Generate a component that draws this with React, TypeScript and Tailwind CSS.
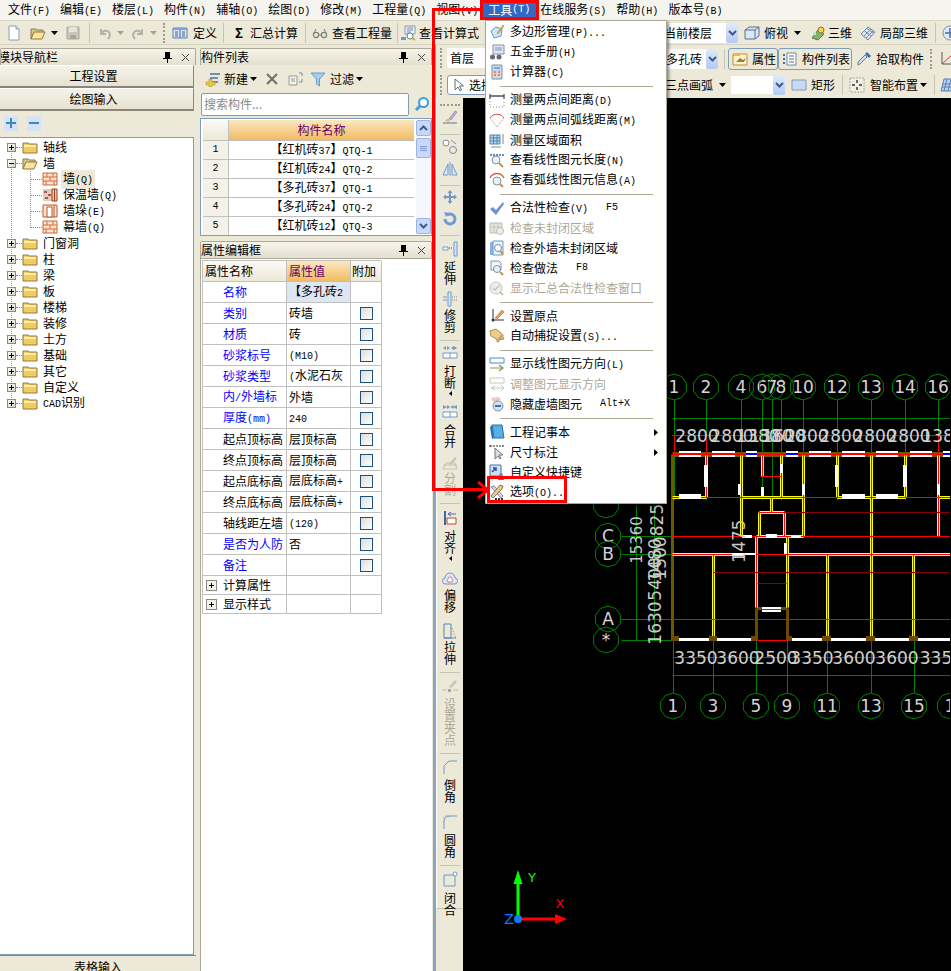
import React from "react";

const MONO = "font-['Liberation_Mono',monospace] text-[10px]";

// SimSun-style text: latin runs are half the width of CJK
const Mix = ({ t }: { t: string }) => (
  <>
    {t.split(/([\x20-\x7e]+)/).map((s, i) =>
      i % 2 ? (
        <span key={i} className={MONO}>
          {s}
        </span>
      ) : (
        s
      ),
    )}
  </>
);

const S = ({ c = "", size = 16, children }: { c?: string; size?: number; children: React.ReactNode }) => (
  <svg viewBox="0 0 16 16" width={size} height={size} className={`block shrink-0 ${c}`}>
    {children}
  </svg>
);

const Caret = ({ c = "" }: { c?: string }) => (
  <svg viewBox="0 0 7 4" width={7} height={4} className={`shrink-0 ${c}`}>
    <path d="M0 0h7L3.5 4z" fill="#000" />
  </svg>
);

const ComboArrow = () => (
  <div className="flex h-[20px] w-[12px] shrink-0 items-center justify-center rounded-[2px] bg-[linear-gradient(#dfe9fb,#b4c9f5)]">
    <svg viewBox="0 0 9 6" width={9} height={6}>
      <path d="M1 1l3.5 3.5L8 1" fill="none" stroke="#3a5a9a" strokeWidth="2" />
    </svg>
  </div>
);

const Sep = ({ c = "" }: { c?: string }) => <div className={`h-[20px] w-px shrink-0 bg-[#c9c5b2] ${c}`} />;

const Grip = ({ c = "" }: { c?: string }) => (
  <div className={`h-[20px] w-[3px] shrink-0 border-l-2 border-dotted border-[#9c9a8a] ${c}`} />
);

/* toolbar icons */
const NewFile = () => (
  <S>
    <path d="M3 1h7l3 3v11H3z" fill="#fff" stroke="#8a9bb0" />
    <path d="M10 1v3h3" fill="#dfe7f2" stroke="#8a9bb0" />
  </S>
);
const Folder = ({ c = "" }: { c?: string }) => (
  <S c={c}>
    <path d="M1 4h5l1 1h8v9H1z" fill="#f6c95c" stroke="#8c7a48" />
    <path d="M2 6h12v2H2z" fill="#fdeeb4" />
  </S>
);
const FolderOpen = () => (
  <S>
    <path d="M1 4h5l1 1h6v3H4l-3 6z" fill="#d9c48a" stroke="#8c7a48" />
    <path d="M4 7h11l-3 7H1z" fill="#fbe39a" stroke="#8c7a48" />
  </S>
);
const SaveIc = () => (
  <S>
    <path d="M2 2h12v12H2z" fill="#c9c7bb" stroke="#aca899" />
    <path d="M4 2h8v5H4z" fill="#e6e4da" />
    <path d="M5 10h6v4H5z" fill="#aca899" />
  </S>
);
const Undo = ({ flip = false }: { flip?: boolean }) => (
  <S c={flip ? "-scale-x-100" : ""}>
    <path d="M4 4v5h5M4 9c2-4 8-5 9 1 0 2-1 3-2 4" fill="none" stroke="#b4b2a6" strokeWidth="2" />
  </S>
);
const DefIc = () => (
  <S>
    <path d="M1 3h14v10H1z" fill="#dbe7f8" stroke="#5b7fb0" />
    <path d="M1 3h14v2H1z" fill="#7fa2d6" />
    <path d="M8 5v8M3 7h3M3 9h3M3 11h3M10 7h3M10 9h3M10 11h3" stroke="#40608f" />
  </S>
);
const Glasses = () => (
  <S>
    <circle cx="4" cy="10" r="2.6" fill="none" stroke="#7d7d78" strokeWidth="1.2" />
    <circle cx="12" cy="10" r="2.6" fill="none" stroke="#7d7d78" strokeWidth="1.2" />
    <path d="M6.5 10h3M2 8l2-4M14 8l-2-4" stroke="#7d7d78" />
  </S>
);
const Formula = () => (
  <S>
    <path d="M5 1h10v8H5z" fill="#e9eef6" stroke="#8a9bb0" />
    <path d="M7 3h6M7 5h6M7 7h4" stroke="#7d8fa8" />
    <path d="M1 12h5v3H1z" fill="#6f97d6" />
    <circle cx="10" cy="11" r="3" fill="#fff" stroke="#5f7f9f" />
    <path d="M12 13l3 2" stroke="#d9a23a" strokeWidth="2" />
  </S>
);
const Cube = () => (
  <S>
    <path d="M1 5l4-3h10v9l-4 3H1z" fill="#d9e6f5" stroke="#5b6f8a" />
    <path d="M1 5h10v9M11 5l4-3" fill="none" stroke="#5b6f8a" />
  </S>
);
const ThreeD = () => (
  <S>
    <path d="M2 13l6-8 6 4-6 6z" fill="#7fb36a" stroke="#5a7f4a" />
    <circle cx="11" cy="5" r="3" fill="#f2d64a" stroke="#8a7a20" />
    <path d="M3 7h3v3H3z" fill="#cfd8e6" />
  </S>
);
const Local3D = () => (
  <S>
    <path d="M1 9l7-7 7 5-7 8z" fill="#dce7f6" stroke="#6f88aa" />
    <path d="M4.500 6l7 5M7 3.500l7 5M4 11l7-7M6 13l7-7" stroke="#6f88aa" fill="none" />
  </S>
);
const MoveRound = () => (
  <S>
    <circle cx="8" cy="8" r="7" fill="#dfe8f6" stroke="#7f92ae" />
    <path d="M8 3v10M3 8h10" stroke="#4a6aa0" strokeWidth="1.4" />
  </S>
);
const Attr = () => (
  <S>
    <path d="M1 3h14v11H1z" fill="#fdf3d6" stroke="#c48a2a" />
    <path d="M1 3h6l1 2H1z" fill="#f0b24a" />
    <path d="M4 11l4-4 3 2 3-2-2 4z" fill="#a07f20" />
  </S>
);
const ListIc = () => (
  <S>
    <path d="M5 2h9v12H5z" fill="#fff" stroke="#6f88aa" />
    <path d="M7 5h5M7 8h5M7 11h5" stroke="#4a6aa0" />
    <path d="M1 3h2v2H1zM1 7h2v2H1zM1 11h2v2H1z" fill="#4a6aa0" />
  </S>
);
const Dropper = () => (
  <S>
    <path d="M2 14l2-1 7-7-2-2-7 7z" fill="#cfe0f4" stroke="#5f7fa8" />
    <path d="M9 3l2-2 4 4-2 2z" fill="#3f6fb0" />
  </S>
);
const Origin2 = () => (
  <S>
    <path d="M3 1v12h12" fill="none" stroke="#555" />
    <path d="M3 13L14 3" stroke="#d33" />
  </S>
);
const RectIc = () => (
  <S>
    <path d="M1 3h14v10H1z" fill="#c8d9f4" stroke="#7f9db9" />
  </S>
);
const SmartIc = () => (
  <S>
    <path d="M1 1h14v14H1z" fill="#f2f0e4" stroke="#a8a696" strokeDasharray="2 1" />
    <path d="M8 3v3M8 10v3M3 8h3M10 8h3" stroke="#333" strokeWidth="1.4" />
  </S>
);
const Slab = () => (
  <S>
    <path d="M4 2h11l-3 12H1z" fill="#b9d2f2" stroke="#5b7fb0" />
    <path d="M3 7h11M2 10h11M7 2l-3 12M11 2l-3 12" stroke="#5b7fb0" fill="none" />
  </S>
);
const SelectArrow = () => (
  <S>
    <path d="M5 2v11l3-3 2 4 1.500-1-2-4h4z" fill="#fff" stroke="#5f6f85" />
  </S>
);

/* tree and panel icons */
const Brick = () => (
  <S>
    <path d="M1 2h14v12H1z" fill="#fbe3cf" stroke="#c8683a" />
    <path d="M1 6h14M1 10h14M5 2v4M11 2v4M8 6v4M4 10v4M12 10v4" stroke="#d9683a" />
  </S>
);
const Insul = () => (
  <S>
    <path d="M1 2h9v12H1z" fill="#e6c9bd" />
    <path d="M2 4h3v2H2zM6 7h3v2H6zM3 10h3v2H3z" fill="#a45a4a" />
    <path d="M10 2h5v12h-5z" fill="#f3c8a0" stroke="#9a3f1a" />
    <path d="M12.500 2v12" stroke="#9a3f1a" />
  </S>
);
const Pier = () => (
  <S>
    <path d="M1 2h14v12H1z" fill="#fbe3cf" stroke="#b8582a" />
    <path d="M5 4h5v10H5z" fill="#fff" stroke="#b8582a" />
    <path d="M12 2v12" stroke="#b8582a" />
  </S>
);
const PlusBox = ({ minus = false }: { minus?: boolean }) => (
  <div className="relative h-[9px] w-[9px] shrink-0 border border-[#7f8a9a] bg-[linear-gradient(135deg,#fff,#d6d0c0)]">
    <div className="absolute left-[1px] top-[3px] h-px w-[5px] bg-black" />
    {!minus && <div className="absolute left-[3px] top-[1px] h-[5px] w-px bg-black" />}
  </div>
);
const TreeFolder = ({ label, minus, open }: { label: string; minus?: boolean; open?: boolean }) => (
  <div className="flex h-[16px] items-center pl-[7px]">
    <PlusBox minus={minus} />
    <div className="w-[6px] border-t border-dotted border-[#888]" />
    {open ? <FolderOpen /> : <Folder />}
    <span className="ml-[5px] leading-[16px]">
      <Mix t={label} />
    </span>
  </div>
);
const TreeChild = ({ icon, label, sel }: { icon: React.ReactNode; label: string; sel?: boolean }) => (
  <div className="flex h-[16px] items-center pl-[31px]">
    <div className="w-[11px] border-t border-dotted border-[#888]" />
    {icon}
    <span className={`ml-[3px] px-[2px] leading-[16px] ${sel ? "bg-[#ece9d8]" : ""}`}>
      <Mix t={label} />
    </span>
  </div>
);

const PanelTitle = ({ title, clip }: { title: string; clip?: boolean }) => (
  <div className="flex h-[17px] items-center overflow-hidden rounded-t-[2px] border border-[#aca899] border-b-0 bg-[linear-gradient(#f6f4ea,#e4e0cf)]">
    <span className={`leading-[16px] ${clip ? "-ml-[3px]" : ""}`}>{title}</span>
    <svg viewBox="0 0 9 11" width={9} height={11} className="ml-auto mr-[9px] shrink-0">
      <path d="M2 0h5v6h2v1H5v4H4V7H0V6h2z" fill="#000" />
    </svg>
    <svg viewBox="0 0 9 9" width={9} height={9} className="mr-[5px] shrink-0">
      <path d="M1 1l7 7M8 1L1 8" stroke="#444" />
    </svg>
  </div>
);

const TBtn = ({ label }: { label: string }) => (
  <div className="mr-[2px] flex h-[22px] items-center justify-center border border-[#8a8778] border-l-0 border-t-[#fff] bg-[linear-gradient(#f5f3e9,#e6e2d2)] pr-[6px] shadow-[0_1px_0_#8a8778]">
    {label}
  </div>
);

/* menu icons */
const M = {
  poly: (
    <S>
      <path d="M2 7l5-4 6 2-1 7-7 2z" fill="#cfe6fa" stroke="#5f9ad0" />
      <path d="M8 9l6-8 1 1-6 8z" fill="#e8b45a" stroke="#a0782a" strokeWidth=".5" />
    </S>
  ),
  hw: (
    <S>
      <path d="M4 1h11v9H4z" fill="#dfe8f6" stroke="#7f92ae" />
      <path d="M6 4h7M6 6h7" stroke="#7f92ae" />
      <circle cx="3.500" cy="13" r="2.500" fill="#667" />
      <circle cx="10" cy="13" r="2.500" fill="#667" />
    </S>
  ),
  calc: (
    <S>
      <path d="M3 1h10v14H3z" fill="#cfd8e6" stroke="#7f8fa8" />
      <path d="M5 3h6v2H5z" fill="#7fa8e0" />
      <path d="M5 7h2v2H5zM9 7h2v2H9zM5 10h2v2H5zM9 10h2v2H9z" fill="#e08a5a" />
    </S>
  ),
  dist: (
    <S>
      <path d="M1 2v5M15 2v5" stroke="#222" />
      <path d="M1 4h14" stroke="#445" strokeWidth="1.4" />
      <path d="M1 9v6h14V9" fill="none" stroke="#888" strokeDasharray="1 2" />
    </S>
  ),
  arc: (
    <S>
      <path d="M1 6c3-5 11-5 14 0" fill="none" stroke="#d8554a" />
      <path d="M1 6l7 9 7-9" fill="none" stroke="#d8a09a" strokeDasharray="2 1" />
    </S>
  ),
  area: (
    <S>
      <path d="M1 3h10v9H1z" fill="#b9d6ee" stroke="#4f86ad" />
      <path d="M4.500 3v9M8 3v9M1 6h10M1 9h10" stroke="#4f86ad" />
      <path d="M14 2v10M2 15h10" stroke="#888" />
    </S>
  ),
  lens: (
    <S>
      <path d="M1 3h14" stroke="#5f8fc0" strokeDasharray="2 1" strokeWidth="2" />
      <circle cx="7" cy="8" r="4" fill="#e9f2fa" stroke="#7f92a8" />
      <path d="M10 11l4 4" stroke="#c8953a" strokeWidth="2" />
    </S>
  ),
  arcLens: (
    <S>
      <path d="M1 6c3-6 11-6 14 0" fill="none" stroke="#d8654a" strokeWidth="1.500" />
      <circle cx="8" cy="9" r="4" fill="#e9f2fa" stroke="#7f92a8" />
      <path d="M11 12l3 3" stroke="#c8953a" strokeWidth="2" />
    </S>
  ),
  check: (
    <S>
      <path d="M1 9l3-2 3 3 7-8 1 2-8 11z" fill="#6a93d8" />
    </S>
  ),
  unclosedOff: (
    <S>
      <path d="M1 3h12v10H1z" fill="#e6e6e0" stroke="#bdbdb5" />
      <path d="M5 3v10M9 3v10M1 7h12" stroke="#c8c8c0" />
      <circle cx="11" cy="11" r="3.500" fill="#eee" stroke="#bbb" />
    </S>
  ),
  outer: (
    <S>
      <path d="M1 2h3v13H1z" fill="#8ab4e0" />
      <path d="M4 1h10v14H4z" fill="#e9f2fa" stroke="#6f9ac0" />
      <circle cx="9" cy="8" r="3.500" fill="#fff" stroke="#6f8aa8" />
      <path d="M11 11l3 3" stroke="#c8953a" strokeWidth="2" />
    </S>
  ),
  doc: (
    <S>
      <path d="M2 1h8l2 2v7H2z" fill="#f2f6fb" stroke="#7f92ae" />
      <circle cx="8" cy="9" r="3.500" fill="#e9f2fa" stroke="#7f92a8" />
      <path d="M11 12l3 3" stroke="#c8953a" strokeWidth="2" />
    </S>
  ),
  sumOff: (
    <S>
      <circle cx="7" cy="8" r="6" fill="#eee" stroke="#c4c4bc" />
      <path d="M4 8l2 2 5-5" fill="none" stroke="#c4c4bc" strokeWidth="1.500" />
      <path d="M11 12l3 3" stroke="#c4c4bc" strokeWidth="2" />
    </S>
  ),
  origin: (
    <S>
      <path d="M4 1v11h11" fill="none" stroke="#333" />
      <circle cx="4" cy="12" r="1.500" fill="#333" />
      <path d="M6 10l7-8 2 2-7 7z" fill="#e0a060" stroke="#b05030" strokeWidth=".5" />
    </S>
  ),
  snap: (
    <S>
      <path d="M1 3l6-2 5 4 3 6-6 1-7-4z" fill="#e8cf8a" stroke="#a8904a" />
      <path d="M7 13l6-7 2 1-6 8z" fill="#c8a070" />
    </S>
  ),
  dir: (
    <S>
      <path d="M1 2h14v5H1z" fill="#fff" stroke="#4a8ad0" />
      <path d="M1 12h12M10 9l4 3-4 3" fill="none" stroke="#7a9a5a" strokeWidth="1.200" />
    </S>
  ),
  dirOff: (
    <S>
      <path d="M1 2h14v5H1z" fill="#fff" stroke="#c8c8c0" />
      <path d="M3 12h12M12 9l3 3-3 3M6 10l-4 2 4 2" fill="none" stroke="#c8c8c0" />
    </S>
  ),
  hide: (
    <S>
      <path d="M2 2l8-1 2 3-8 2z" fill="#f2c8b0" />
      <circle cx="9" cy="10" r="5" fill="#cfe2f5" stroke="#6f92b8" />
      <path d="M6 10h6" stroke="#4a6aa0" strokeWidth="2" />
    </S>
  ),
  note: (
    <S>
      <path d="M3 1h10l2 13H5z" fill="#55b0e8" stroke="#2a70a8" />
      <path d="M1 3l2-2 2 13-2 1z" fill="#2a70a8" />
    </S>
  ),
  dim: (
    <S>
      <path d="M1 1v3M14 1v3M1 2h13" stroke="#333" strokeDasharray="2 1" />
      <path d="M6 4v11l3-3 2 3 1-1-2-3h4z" fill="#dcdcdc" stroke="#777" />
    </S>
  ),
  key: (
    <S>
      <path d="M1 1h11v11H1z" fill="#cfe0f4" stroke="#4a70a8" />
      <path d="M3 8l4-4M4 4h3v3" fill="none" stroke="#2a50a0" strokeWidth="1.500" />
      <circle cx="12" cy="11" r="2" fill="#5f8fd0" />
      <path d="M9 16c0-3 6-3 6 0z" fill="#4a70a8" />
    </S>
  ),
  tools: (
    <S>
      <path d="M2 3l3-1 9 10-2 2z" fill="#d8dde4" stroke="#808890" />
      <path d="M11 1l3 1-1 3-9 9-2-2z" fill="#e8c890" stroke="#907850" />
      <path d="M6 14h2v2H6zM9 14h2v2H9zM12 14h2v2h-2z" fill="#333" />
    </S>
  ),
};

type MI =
  | "sep"
  | { i: React.ReactNode; t: string; k?: string; off?: boolean; sub?: boolean; c?: string };

const MENU: MI[] = [
  { i: M.poly, t: "多边形管理(P)..." },
  { i: M.hw, t: "五金手册(H)" },
  { i: M.calc, t: "计算器(C)" },
  "sep",
  { i: M.dist, t: "测量两点间距离(D)" },
  { i: M.arc, t: "测量两点间弧线距离(M)" },
  { i: M.area, t: "测量区域面积" },
  { i: M.lens, t: "查看线性图元长度(N)" },
  { i: M.arcLens, t: "查看弧线性图元信息(A)" },
  "sep",
  { i: M.check, t: "合法性检查(V)", k: "F5" },
  { i: M.unclosedOff, t: "检查未封闭区域", off: true },
  { i: M.outer, t: "检查外墙未封闭区域" },
  { i: M.doc, t: "检查做法", k: "F8" },
  { i: M.sumOff, t: "显示汇总合法性检查窗口", off: true },
  "sep",
  { i: M.origin, t: "设置原点" },
  { i: M.snap, t: "自动捕捉设置(S)..." },
  "sep",
  { i: M.dir, t: "显示线性图元方向(L)" },
  { i: M.dirOff, t: "调整图元显示方向", off: true },
  { i: M.hide, t: "隐藏虚墙图元", k: "Alt+X" },
  "sep",
  { i: M.note, t: "工程记事本", sub: true },
  { i: M.dim, t: "尺寸标注", sub: true },
  { i: M.key, t: "自定义快捷键" },
  { i: M.tools, t: "选项(O).." },
];

/* left drawing toolbar */
type VT = {
  m: string;
  i: React.ReactNode;
  t?: string;
  tm?: string;
  off?: boolean;
  arrow?: boolean;
};
const blue = "#6f9ac8";
const V = {
  brush: (
    <S>
      <path d="M7 10l6-8 2 1-6 8z" fill="#c8a8d8" stroke="#806890" strokeWidth=".5" />
      <path d="M3 12c2-3 4-3 5-2l-1 3z" fill="#e0c070" />
      <path d="M1 14h14" stroke="#4a7ab0" />
    </S>
  ),
  circles: (
    <S>
      <circle cx="4" cy="4" r="3" fill="#fff" stroke="#7f8a9a" />
      <circle cx="11" cy="11" r="3.500" fill="none" stroke="#7f8a9a" />
      <path d="M9 1l5 4" stroke="#7f8a9a" />
    </S>
  ),
  mirror: (
    <S>
      <path d="M8 1v14M6 3L1 14h5zM10 3l5 11h-5z" fill="#dbe7f8" stroke={blue} />
    </S>
  ),
  move: (
    <S>
      <path d="M8 1l2.500 3H9v3h3V5.500L15 8l-3 2.500V9H9v3h1.500L8 15l-2.500-3H7V9H4v1.500L1 8l3-2.500V7h3V4H5.500z" fill={blue} />
    </S>
  ),
  rotate: (
    <S>
      <path d="M3 8a5 5 0 1 0 2-4" fill="none" stroke="#6f9ad8" strokeWidth="3" />
      <path d="M2 1l5 1-3 4z" fill="#6f9ad8" />
    </S>
  ),
  extend: (
    <S>
      <path d="M12 1h3v14h-3z" fill="#dbe7f8" stroke={blue} />
      <path d="M1 6h5v3H1z" fill="#fff" stroke={blue} />
      <path d="M7 7h4" stroke="#444" strokeDasharray="1 1" />
    </S>
  ),
  trim: (
    <S>
      <path d="M6 1h3v14H6z" fill="#dbe7f8" stroke={blue} />
      <path d="M1 6h4M1 9h4" stroke={blue} />
      <path d="M10 6h5M10 9h5" stroke="#888" strokeDasharray="1 1" />
    </S>
  ),
  split: (
    <S>
      <path d="M1 3l3-2v4zM8 3L5 1v4zM9 3l3-2v4zM15 3l-3-2v4z" fill={blue} />
      <path d="M1 8h14v5H1zM8 8v5" fill="#fff" stroke={blue} />
    </S>
  ),
  merge: (
    <S>
      <path d="M1 1l4 2-4 2zM8 3L5 1v4zM15 1l-4 2 4 2zM8.500 3l3-2v4z" fill={blue} />
      <path d="M1 8h14v5H1zM8 8v5" fill="#fff" stroke={blue} />
    </S>
  ),
  cut: (
    <S>
      <path d="M1 14l3-6h9l2 6zM1 10h14" fill="none" stroke="#c4c2b4" />
      <path d="M7 9l6-7 2 1-6 7z" fill="#c4c2b4" />
    </S>
  ),
  align: (
    <S>
      <path d="M2 1h2v14H2z" fill="#3f66a8" />
      <path d="M5 8h9v6H5z" fill="#fff" stroke="#b04a3a" />
      <path d="M6 4h8M6 4l3-2M6 4l3 2" stroke="#5a62c0" fill="none" />
    </S>
  ),
  cloud: (
    <S>
      <path d="M4 13a3 3 0 0 1-1-6 5 5 0 0 1 10 0 3 3 0 0 1-1 6z" fill="#dbe7f8" stroke="#7f92ae" />
      <path d="M6 11a2 2 0 0 1 0-3 2 2 0 0 1 4 0 2 2 0 0 1 0 3z" fill="#fff" stroke="#d8756a" />
    </S>
  ),
  stretch: (
    <S>
      <path d="M2 1h7v14H2zM2 15h12" fill="none" stroke="#5f82ad" />
      <path d="M10 5l4 10" stroke="#777" strokeDasharray="1 2" />
    </S>
  ),
  gripOff: (
    <S>
      <path d="M7 9l6-7 2 2-6 6z" fill="#c4c2b4" />
      <path d="M0 12h5M11 12h5" stroke="#bbb" />
      <path d="M6 11h3v3H6z" fill="#a8a698" />
    </S>
  ),
  chamfer: (
    <S>
      <path d="M2 15V7l5-5h8" fill="none" stroke={blue} />
      <path d="M2 7l5-5" stroke="#888" strokeDasharray="1 1" />
    </S>
  ),
  fillet: (
    <S>
      <path d="M2 15V8q0-6 6-6h7" fill="none" stroke={blue} />
      <path d="M2 3v5M3 2h5" stroke="#999" strokeDasharray="1 1" />
    </S>
  ),
  closeIc: (
    <S>
      <path d="M2 4h11v11H2z" fill="none" stroke={blue} />
      <circle cx="13" cy="3" r="2" fill="#fff" stroke={blue} />
    </S>
  ),
};
const VTOOLS: (VT | string)[] = [
  { m: "mt-[3px]", i: V.brush },
  "mt-[9px]",
  { m: "mt-[4px]", i: V.circles },
  { m: "mt-[6px]", i: V.mirror },
  "mt-[8px]",
  { m: "mt-[3px]", i: V.move },
  { m: "mt-[6px]", i: V.rotate },
  "mt-[8px]",
  { m: "mt-[5px]", i: V.extend, t: "延伸", tm: "mt-[4px]" },
  { m: "mt-[6px]", i: V.trim, t: "修剪", tm: "mt-[2px]" },
  "mt-[7px]",
  { m: "mt-[4px]", i: V.split, t: "打断", tm: "mt-[4px]", arrow: true },
  { m: "mt-[8px]", i: V.merge, t: "合并", tm: "mt-[4px]" },
  { m: "mt-[7px]", i: V.cut, t: "分割", tm: "mt-[1px]", off: true },
  "mt-[7px]",
  { m: "mt-[6px]", i: V.align, t: "对齐", tm: "mt-[4px]", arrow: true },
  { m: "mt-[10px]", i: V.cloud, t: "偏移", tm: "mt-[2px]" },
  { m: "mt-[10px]", i: V.stretch, t: "拉伸", tm: "mt-[2px]" },
  "mt-[7px]",
  { m: "mt-[5px]", i: V.gripOff, t: "设置夹点", tm: "mt-[4px]", off: true },
  "mt-[7px]",
  { m: "mt-[5px]", i: V.chamfer, t: "倒角", tm: "mt-[4px]" },
  { m: "mt-[11px]", i: V.fillet, t: "圆角", tm: "mt-[4px]" },
  "mt-[7px]",
  { m: "mt-[5px]", i: V.closeIc, t: "闭合", tm: "mt-[5px]" },
];

/* drawing */
const octagon = (x: number, y: number, r = 13) =>
  Array.from({ length: 10 }, (_, i) => {
    const a = (Math.PI * 2 * i) / 10 + Math.PI / 10;
    return `${(x + r * Math.cos(a)).toFixed(1)},${(y + r * Math.sin(a)).toFixed(1)}`;
  }).join(" ");

const Bubble = ({ x, y, t }: { x: number; y: number; t: string }) => (
  <g>
    <polygon points={octagon(x, y)} fill="none" stroke="#008000" />
    <text x={x} y={y + 6} textAnchor="middle" fill="#d4d4d4">
      {t}
    </text>
  </g>
);

const TOP: [number, string][] = [
  [675, "1"], [707, "2"], [742, "4"], [763, "6"], [773, "7"], [782, "8"],
  [804, "10"], [838, "12"], [872, "13"], [906, "14"], [939, "16"],
];
const BOTTOM: [number, string][] = [
  [674, "1"], [714, "3"], [757, "5"], [788, "9"], [828, "11"], [872, "13"], [915, "15"], [951, "1"],
];
const TOP_DIMS: [number, string][] = [
  [698, "2800"], [733, "2800"], [759, "1380"], [772, "1380"], [785, "1600"], [808, "2800"],
  [842, "2800"], [876, "2800"], [910, "2800"], [944, "1380"],
];
const BOTTOM_DIMS: [number, string][] = [
  [697, "3350"], [739, "3600"], [777, "2500"], [813, "3350"], [855, "3600"], [898, "3600"], [937, "335"],
];
const WALLS: number[][] = [
  [707, 455, 707, 497], [742, 455, 742, 536], [763, 455, 763, 476], [782, 455, 782, 497],
  [804, 455, 804, 536], [838, 455, 838, 497], [872, 455, 872, 640], [906, 455, 906, 497],
  [939, 455, 939, 536],
  [673, 497, 707, 497], [742, 497, 804, 497], [838, 497, 906, 497], [939, 497, 951, 497],
  [772, 497, 772, 512], [760, 512, 785, 512], [760, 512, 760, 536], [785, 512, 785, 536],
  [757, 536, 804, 536], [673, 554, 745, 554], [788, 554, 951, 554],
  [757, 536, 757, 607], [788, 536, 788, 607],
  [714, 554, 714, 640], [828, 554, 828, 640], [914, 554, 914, 640],
];
const WHITE_TOP: number[][] = [
  [680, 22], [713, 23], [747, 11], [787, 12], [810, 22], [843, 23], [877, 22], [911, 22], [944, 7],
];
const WHITE_BOTTOM: number[][] = [
  [678, 32], [718, 34], [793, 30], [832, 35], [876, 34], [919, 32],
];

const Drawing = () => (
  <svg
    viewBox="464 98 487 873"
    width={487}
    height={873}
    className="block font-['DejaVu_Sans',sans-serif] text-[17px]"
  >
    {/* axis lines */}
    {TOP.map(([x]) => (
      <line key={x} x1={x + 0.5} y1={400} x2={x + 0.5} y2={500} stroke="#008000" />
    ))}
    {BOTTOM.map(([x]) => (
      <line key={x} x1={x + 0.5} y1={640} x2={x + 0.5} y2={693} stroke="#008000" />
    ))}
    <g transform="translate(.5 .5)">
      <path d="M673 418H951M673 435H951M673 657H951M673 675H951" stroke="#008000" />
      <path d="M622 536H673M622 554H673M622 619H673M622 640H673M637 505V640M655 505V640" stroke="#008000" />
      {/* walls */}
      <path d="M673 454H951" stroke="#6b5a00" strokeWidth="5" />
      <path d="M673 454V640" stroke="#6b5a00" strokeWidth="3" />
      <path d="M757 608V640M788 608V640M757 608H788" stroke="#6b4a00" strokeWidth="3" />
      {WALLS.map((w, i) => (
        <line key={i} x1={w[0]} y1={w[1]} x2={w[2]} y2={w[3]} stroke="#ffff00" strokeWidth="3" />
      ))}
      {WALLS.map((w, i) => (
        <line key={i} x1={w[0]} y1={w[1]} x2={w[2]} y2={w[3]} stroke="#ff0000" strokeWidth="1" />
      ))}
      <path d="M673 435H951M673 454H951M673 497H951M673 536H951M673 554H951M673 619H951M673 640H951" stroke="#ff0000" />
      <path d="M675 435V454M707 435V454M742 435V454M782 435V454M804 435V454M838 435V454M872 435V454M906 435V454M939 435V454" stroke="#ff0000" />
      <path d="M763 476H782" stroke="#ff0000" />
      <path d="M785 512H951M714 572H951M758 583H787" stroke="#8b0000" />
    </g>
    {/* windows */}
    {WHITE_TOP.map(([x, w], i) => (
      <g key={x}>
        <rect x={x} y={451} width={w} height={6} fill="#fff" />
        <rect x={x} y={453} width={w} height={2} fill={i === 2 || i === 3 || i === 8 ? "#0000ff" : "#ff0000"} />
      </g>
    ))}
    {WHITE_BOTTOM.map(([x, w]) => (
      <rect key={x} x={x} y={638} width={w} height={3} fill="#fff" />
    ))}
    <path d="M680 494h22v5h-22zM843 494h23v5h-23zM877 494h22v5h-22z" fill="#fff" />
    <path d="M705 465h4v22h-4zM836 465h3v22h-3zM904 465h4v22h-4zM762 487h3v9h-3zM781 464h3v9h-3zM803 484h3v11h-3zM739 484h3v11h-3zM938 484h3v11h-3z" fill="#fff" />
    <path d="M743 535h10v3h-10zM767 534h11v4h-11zM792 536h10v2h-10zM785 543h3v11h-3zM733 553h24v2h-24zM763 607h19v2h-19zM763 610h19v2h-19z" fill="#fff" />
    <path d="M673 636h7v5h-7zM710 636h8v5h-8zM752 636h7v5h-7zM788 636h5v5h-5zM823 636h9v5h-9zM867 636h9v5h-9zM910 636h9v5h-9z" fill="#6b4a00" />
    {/* dimensions */}
    {TOP_DIMS.map(([x, t]) => (
      <text key={x} x={x} y={442} textAnchor="middle" fill="#d0d0d0">
        {t}
      </text>
    ))}
    {BOTTOM_DIMS.map(([x, t]) => (
      <text key={x} x={x} y={664} textAnchor="middle" fill="#d0d0d0">
        {t}
      </text>
    ))}
    <g fill="#c8c8c8" textAnchor="middle">
      <text x={643} y={540} transform="rotate(-90 643 540)" className="text-[15px]">15360</text>
      <text x={662} y={579} transform="rotate(-90 662 579)">5400</text>
      <text x={662} y={623} transform="rotate(-90 662 623)">1630</text>
      <text x={662} y={560} transform="rotate(-90 662 560)">1480</text>
      <text x={664} y={520} transform="rotate(-90 664 520)">825</text>
      <text x={667} y={558} transform="rotate(-90 667 558)">1500</text>
      <text x={746} y={541} transform="rotate(-90 746 541)">1475</text>
    </g>
    {/* axis bubbles */}
    {TOP.map(([x, t]) => (
      <Bubble key={x} x={x} y={387} t={t} />
    ))}
    {BOTTOM.map(([x, t]) => (
      <Bubble key={x} x={x} y={706} t={t} />
    ))}
    <Bubble x={607} y={505} t="" />
    <Bubble x={609} y={536} t="C" />
    <Bubble x={609} y={554} t="B" />
    <Bubble x={609} y={619} t="A" />
    <Bubble x={607} y={640} t="*" />
    {/* UCS */}
    <path d="M517.500 919V884h-3L519 870l4.500 14h-3V919z" fill="#00ff00" />
    <path d="M519 917.500H556V914L568 919l-12 5v-3.500H519z" fill="#ff0000" />
    <circle cx={519} cy={919} r={4} fill="#0a7cff" />
    <text x={533} y={882} textAnchor="middle" fill="#00ff00" className="text-[13px]">Y</text>
    <text x={561} y={908} textAnchor="middle" fill="#ff0000" className="text-[13px]">X</text>
    <text x={510} y={924} textAnchor="middle" fill="#0a7cff" className="text-[14px]">Z</text>
  </svg>
);

/* property grid */
const PROPS: [string, string, boolean][] = [
  ["名称", "【多孔砖2", true],
  ["类别", "砖墙", true],
  ["材质", "砖", true],
  ["砂浆标号", " (M10)", true],
  ["砂浆类型", " (水泥石灰", true],
  ["内/外墙标", "外墙", true],
  ["厚度(mm)", "240", true],
  ["起点顶标高", "层顶标高", false],
  ["终点顶标高", "层顶标高", false],
  ["起点底标高", "层底标高+", false],
  ["终点底标高", "层底标高+", false],
  ["轴线距左墙", " (120)", false],
  ["是否为人防", "否", true],
  ["备注", "", true],
];

const cellCls = "flex items-center border-r border-b border-[#c0c0c0] overflow-hidden";

export default function App() {
  const menuNames = [
    "文件(F)", "编辑(E)", "楼层(L)", "构件(N)", "辅轴(O)", "绘图(D)", "修改(M)", "工程量(Q)", "视图(V)",
  ];
  const afterNames = ["在线服务(S)", "帮助(H)", "版本号(B)"];
  return (
    <div className="relative flex h-[971px] w-[951px] flex-col overflow-hidden whitespace-nowrap bg-[#ece9d8] font-['Noto_Sans_CJK_SC',sans-serif] text-[12px] leading-none text-black">
      {/* menu bar */}
      <div className="flex h-[20px] shrink-0 items-center gap-[10px] bg-[#f5f4ee] pl-[8px]">
        {menuNames.map((n) => (
          <span key={n}>
            <Mix t={n} />
          </span>
        ))}
        <span className="-mx-[6px] flex h-[18px] items-center bg-[#316ac5] px-[6px] text-white">
          <Mix t="工具(T)" />
        </span>
        {afterNames.map((n) => (
          <span key={n}>
            <Mix t={n} />
          </span>
        ))}
      </div>

      {/* main toolbar */}
      <div className="flex h-[25px] shrink-0 items-center overflow-hidden border-y border-[#d8d4c2]">
        <div className="flex w-[664px] shrink-0 items-center">
          <div className="ml-[6px]"><NewFile /></div>
          <div className="ml-[8px]"><FolderOpen /></div>
          <Caret c="ml-[5px]" />
          <div className="ml-[7px]"><SaveIc /></div>
          <Sep c="ml-[8px]" />
          <div className="ml-[7px]"><Undo /></div>
          <Caret c="ml-[4px] opacity-30" />
          <div className="ml-[6px]"><Undo flip /></div>
          <Caret c="ml-[4px] opacity-30" />
          <Grip c="ml-[6px]" />
          <div className="ml-[6px]"><DefIc /></div>
          <span className="ml-[5px]">定义</span>
          <Sep c="ml-[6px]" />
          <span className="ml-[9px] w-[12px] text-center text-[13px] font-bold">Σ</span>
          <span className="ml-[5px]">汇总计算</span>
          <Sep c="ml-[7px]" />
          <div className="ml-[6px]"><Glasses /></div>
          <span className="ml-[4px]">查看工程量</span>
          <Sep c="ml-[5px]" />
          <div className="ml-[2px]"><Formula /></div>
          <span className="ml-[3px]">查看计算式</span>
        </div>
        <div className="flex h-[20px] w-[74px] shrink-0 items-center justify-between bg-white">
          <span>当前楼层</span>
          <ComboArrow />
        </div>
        <div className="ml-[6px]"><Cube /></div>
        <span className="ml-[4px]">俯视</span>
        <Caret c="ml-[6px]" />
        <div className="ml-[9px]"><ThreeD /></div>
        <span className="ml-[2px]">三维</span>
        <div className="ml-[8px]"><Local3D /></div>
        <span className="ml-[4px]">局部三维</span>
        <Sep c="ml-[7px]" />
        <div className="ml-[6px]"><MoveRound /></div>
      </div>

      <div className="flex min-h-0 flex-1">
        {/* module nav */}
        <div className="flex w-[196px] shrink-0 flex-col pt-[3px]">
          <PanelTitle title="模块导航栏" clip />
          <TBtn label="工程设置" />
          <div className="h-px" />
          <TBtn label="绘图输入" />
          <div className="flex h-[27px] shrink-0 items-center gap-[9px] pl-[4px]">
            <div className="relative h-[15px] w-[14px] bg-[#d6e2f5]">
              <div className="absolute left-[2px] top-[6px] h-[2px] w-[10px] bg-[#3a88c8]" />
              <div className="absolute left-[6px] top-[2px] h-[10px] w-[2px] bg-[#3a88c8]" />
            </div>
            <div className="relative h-[15px] w-[14px] bg-[#d6e2f5]">
              <div className="absolute left-[2px] top-[6px] h-[2px] w-[10px] bg-[#3a88c8]" />
            </div>
          </div>
          <div className="relative mr-[2px] min-h-0 flex-1 border border-l-0 border-[#7f9db9] bg-white pt-[1px]">
            <div className="absolute left-[11px] top-[10px] h-[256px] border-l border-dotted border-[#999]" />
            <div className="absolute left-[30px] top-[33px] h-[57px] border-l border-dotted border-[#999]" />
            <TreeFolder label="轴线" />
            <TreeFolder label="墙" minus open />
            <TreeChild icon={<Brick />} label="墙(Q)" sel />
            <TreeChild icon={<Insul />} label="保温墙(Q)" />
            <TreeChild icon={<Pier />} label="墙垛(E)" />
            <TreeChild icon={<Brick />} label="幕墙(Q)" />
            {["门窗洞", "柱", "梁", "板", "楼梯", "装修", "土方", "基础", "其它", "自定义", "CAD识别"].map((l) => (
              <TreeFolder key={l} label={l} />
            ))}
          </div>
          <div className="flex h-[16px] shrink-0 items-start justify-center border-t border-[#8a8778] pt-[5px]">
            表格输入
          </div>
        </div>

        {/* component list and properties */}
        <div className="ml-[4px] flex w-[232px] shrink-0 flex-col pt-[3px]">
          <PanelTitle title="构件列表" />
          <div className="flex h-[27px] shrink-0 items-center pl-[5px]">
            <S>
              <path d="M5 3h10M5 7h8M5 11h8" stroke="#4a70a8" fill="none" strokeWidth="1.300" />
              <path d="M1 11h3V8h3v3h3v3H7v2H4v-2H1z" fill="#e8c84a" stroke="#a08a20" strokeWidth=".5" />
            </S>
            <span className="ml-[3px]">新建</span>
            <Caret c="ml-[2px]" />
            <svg viewBox="0 0 12 12" width={12} height={12} className="ml-[9px]">
              <path d="M1 1l10 10M11 1L1 11" stroke="#6f6f68" strokeWidth="2" />
            </svg>
            <svg viewBox="0 0 16 16" width={16} height={16} className="ml-[9px]">
              <path d="M2 5h8v9H2z" fill="#f2f2ee" stroke="#9a9a92" />
              <path d="M4 8h4M4 10h4" stroke="#9a9a92" />
              <path d="M12 2h3v3M12 11h3V8" fill="none" stroke="#5f8fc8" />
            </svg>
            <svg viewBox="0 0 16 16" width={16} height={16} className="ml-[7px]">
              <path d="M1 2h14L9.500 8v7l-3-2V8z" fill="#a8cdf0" stroke="#5f9ad0" />
            </svg>
            <span className="ml-[4px]">过滤</span>
            <Caret c="ml-[2px]" />
          </div>
          <div className="flex h-[24px] shrink-0 items-center pl-[1px]">
            <div className="flex h-[23px] w-[208px] items-center rounded-[2px] border border-[#7f9db9] bg-white pl-[2px] text-[#8a8a8a]">
              搜索构件...
            </div>
            <svg viewBox="0 0 16 16" width={16} height={16} className="ml-[5px]">
              <circle cx="9.500" cy="6.500" r="4.500" fill="#fff" stroke="#3f9ae0" strokeWidth="2" />
              <path d="M6 10l-4 4" stroke="#3f9ae0" strokeWidth="3" />
            </svg>
          </div>
          <div className="mt-[2px] flex h-[118px] shrink-0 overflow-hidden border border-[#7f9db9] bg-white p-[1px] pl-[2px]">
            <div className="w-[211px] shrink-0">
              <div className="flex h-[21px]">
                <div className="w-[26px] border-r border-b border-[#c0c0c0] bg-[linear-gradient(#fbfaf5,#ece9d8)]" />
                <div className="flex flex-1 items-center justify-center border-b border-[#c0c0c0] bg-[linear-gradient(#fbe7c0,#f1bb62)] text-[#660066]">
                  构件名称
                </div>
              </div>
              {["【红机砖37】QTQ-1", "【红机砖24】QTQ-2", "【多孔砖37】QTQ-1", "【多孔砖24】QTQ-2", "【红机砖12】QTQ-3"].map((r, i) => (
                <div key={r} className="flex h-[19px]">
                  <div className="flex w-[26px] items-center justify-center border-r border-b border-[#c0c0c0] bg-[#f4f2e8]">
                    <span className={MONO}>{i + 1}</span>
                  </div>
                  <div className="flex flex-1 items-center justify-center border-b border-[#c0c0c0]">
                    <span>
                      <Mix t={r} />
                    </span>
                  </div>
                </div>
              ))}
            </div>
            <div className="ml-[2px] flex w-[15px] shrink-0 flex-col bg-[#f4f6fc]">
              <div className="flex h-[16px] items-center justify-center rounded-[2px] border border-[#9db5e0] bg-[#c8d8f8]">
                <svg viewBox="0 0 9 6" width={9} height={6}><path d="M1 5l3.500-3.500L8 5" fill="none" stroke="#3a5a9a" strokeWidth="2" /></svg>
              </div>
              <div className="mt-[2px] flex h-[20px] flex-col items-center justify-center gap-[1px] rounded-[2px] border border-[#9db5e0] bg-[#c8d8f8]">
                <div className="h-px w-[7px] bg-[#7f9dd0]" />
                <div className="h-px w-[7px] bg-[#7f9dd0]" />
                <div className="h-px w-[7px] bg-[#7f9dd0]" />
              </div>
              <div className="mt-auto flex h-[16px] items-center justify-center rounded-[2px] border border-[#9db5e0] bg-[#c8d8f8]">
                <svg viewBox="0 0 9 6" width={9} height={6}><path d="M1 1l3.500 3.500L8 1" fill="none" stroke="#3a5a9a" strokeWidth="2" /></svg>
              </div>
            </div>
          </div>
          <div className="mt-[5px]">
            <PanelTitle title="属性编辑框" />
          </div>
          <div className="min-h-0 flex-1 border-l border-t border-[#aca899] bg-white pl-[1px] pt-[1px]">
            <div className="w-[179px] border-l border-t border-[#c0c0c0]">
              <div className="grid h-[21px] grid-cols-[84px_64px_31px]">
                <div className={`${cellCls} bg-[linear-gradient(#fbfaf5,#ece9d8)] pl-[2px]`}>属性名称</div>
                <div className={`${cellCls} bg-[linear-gradient(#fbe7c0,#f1bb62)] pl-[2px] text-[#660066]`}>属性值</div>
                <div className={`${cellCls} bg-[linear-gradient(#fbfaf5,#ece9d8)] pl-[1px]`}>附加</div>
              </div>
              {PROPS.map(([name, val, isBlue], i) => (
                <div key={name} className="grid h-[21px] grid-cols-[84px_64px_31px]">
                  <div className={`${cellCls} pl-[20px] ${isBlue ? "text-[#0000ff]" : ""}`}>
                    <span>
                      <Mix t={name} />
                    </span>
                  </div>
                  <div className={`${cellCls} pl-[2px] ${i === 0 ? "bg-[#dce6f4]" : ""}`}>
                    <span>
                      <Mix t={val} />
                    </span>
                  </div>
                  <div className={`${cellCls} justify-center`}>
                    {i > 0 && (
                      <div className="h-[13px] w-[13px] border border-[#1c5180] bg-[linear-gradient(135deg,#dcdcd7,#fff)]" />
                    )}
                  </div>
                </div>
              ))}
              {["计算属性", "显示样式"].map((t) => (
                <div key={t} className="grid h-[19px] grid-cols-[84px_64px_31px]">
                  <div className={`${cellCls} pl-[3px]`}>
                    <div className="relative h-[11px] w-[11px] shrink-0 border border-[#888] bg-[#f4f2e8]">
                      <div className="absolute left-[2px] top-[4px] h-px w-[5px] bg-black" />
                      <div className="absolute left-[4px] top-[2px] h-[5px] w-px bg-black" />
                    </div>
                    <span className="ml-[6px]">{t}</span>
                  </div>
                  <div className={cellCls} />
                  <div className={cellCls} />
                </div>
              ))}
            </div>
          </div>
        </div>

        {/* drawing area */}
        <div className="ml-px flex min-w-0 flex-1 flex-col border-l-[3px] border-[#8aa4c4]">
          <div className="flex h-[26px] shrink-0 items-center overflow-hidden">
            <Grip c="ml-[4px]" />
            <div className="ml-[4px] flex h-[20px] w-[220px] shrink-0 items-center bg-white pl-[3px]">首层</div>
          </div>
          <div className="flex h-[27px] shrink-0 items-center overflow-hidden">
            <Grip c="ml-[4px]" />
            <div className="ml-[4px] flex h-[20px] w-[70px] shrink-0 items-center rounded-[3px] border border-[#7f9db9] bg-white pl-[2px]">
              <SelectArrow />
              <span className="ml-[3px]">选择</span>
            </div>
          </div>
          <div className="flex min-h-0 flex-1">
            <div className="flex w-[27px] shrink-0 flex-col">
              <div className="flex h-[811px] flex-col items-center border-b border-l border-[#c9c5b2] border-l-white">
                <div className="mt-[6px] h-[3px] w-[20px] border-t-2 border-dotted border-[#9c9a8a]" />
                {VTOOLS.map((it, i) =>
                  typeof it === "string" ? (
                    <div key={i} className={`h-px w-[20px] shrink-0 bg-[#c9c5b2] ${it}`} />
                  ) : (
                    <div key={i} className={`flex shrink-0 flex-col items-center ${it.m}`}>
                      {it.i}
                      {it.t && (
                        <div className={`w-[12px] whitespace-normal break-all text-center leading-[12px] ${it.tm} ${it.off ? "text-[#aca899]" : ""}`}>
                          {it.t}
                        </div>
                      )}
                      {it.arrow && (
                        <svg viewBox="0 0 3 5" width={3} height={5} className="mt-[2px]">
                          <path d="M3 0v5L0 2.500z" fill="#000" />
                        </svg>
                      )}
                    </div>
                  ),
                )}
              </div>
            </div>
            <div className="min-w-0 flex-1 bg-black">
              <Drawing />
            </div>
          </div>
        </div>
      </div>

      {/* second and third toolbar rows, right side */}
      <div className="absolute left-[666px] top-[46px] flex h-[25px] w-[285px] items-center overflow-hidden bg-[#ece9d8]">
        <div className="flex h-[20px] w-[52px] shrink-0 items-center justify-between bg-white">
          <span className="w-[36px] overflow-hidden">多孔砖:</span>
          <ComboArrow />
        </div>
        <Sep c="ml-[6px]" />
        <div className="ml-[3px] flex h-[22px] w-[50px] shrink-0 items-center rounded-[3px] border border-[#7f9db9] pl-[3px]">
          <Attr />
          <span className="ml-[4px]">属性</span>
        </div>
        <div className="flex h-[22px] w-[74px] shrink-0 items-center rounded-[3px] border border-[#7f9db9] pl-[3px]">
          <ListIc />
          <span className="ml-[4px]">构件列表</span>
        </div>
        <div className="ml-[4px]"><Dropper /></div>
        <span className="ml-[4px]">拾取构件</span>
        <Grip c="ml-[6px]" />
        <div className="ml-[6px]"><Origin2 /></div>
      </div>
      <div className="absolute left-[665px] top-[72px] flex h-[26px] w-[286px] items-center overflow-hidden bg-[#ece9d8]">
        <span>三点画弧</span>
        <Caret c="ml-[6px]" />
        <div className="ml-[5px] flex h-[18px] w-[54px] shrink-0 items-center justify-end bg-white">
          <ComboArrow />
        </div>
        <div className="ml-[6px]"><RectIc /></div>
        <span className="ml-[4px]">矩形</span>
        <Sep c="ml-[7px]" />
        <div className="ml-[6px]"><SmartIc /></div>
        <span className="ml-[5px]">智能布置</span>
        <Caret c="ml-[2px]" />
        <Sep c="ml-[7px]" />
        <div className="ml-[5px]"><Slab /></div>
      </div>

      {/* dropdown menu */}
      <div className="absolute left-[485px] top-[20px] w-[182px] border border-[#aca899] bg-white py-px shadow-[2px_2px_3px_rgba(0,0,0,0.45)]">
        {MENU.map((m, i) =>
          m === "sep" ? (
            <div key={i} className="flex h-[8px] items-center pl-[14px]">
              <div className="h-px w-[153px] bg-[#aca899]" />
            </div>
          ) : (
            <div key={m.t} className={`flex h-[20px] items-center pl-[3px] ${m.off ? "text-[#aca899]" : ""}`}>
              {m.i}
              <span className="ml-[5px]">
                <Mix t={m.t} />
              </span>
              {m.k && <span className={`ml-[18px] ${MONO}`}>{m.k}</span>}
              {m.sub && (
                <svg viewBox="0 0 4 7" width={4} height={7} className="ml-auto mr-[8px]">
                  <path d="M0 0l4 3.500L0 7z" fill="#000" />
                </svg>
              )}
            </div>
          ),
        )}
      </div>

      {/* red annotations */}
      <div className="absolute left-[480px] top-0 h-[20px] w-[59px] border-[3px] border-[#ff0000]" />
      <div className="absolute left-[432px] top-[8px] h-[3px] w-[49px] bg-[#ff0000]" />
      <div className="absolute left-[432px] top-[8px] h-[483px] w-[3px] bg-[#ff0000]" />
      <div className="absolute left-[432px] top-[488px] h-[3px] w-[56px] bg-[#ff0000]" />
      <svg viewBox="0 0 14 18" width={14} height={18} className="absolute left-[476px] top-[481px]">
        <path d="M2 1l10 8-10 8" fill="none" stroke="#ff0000" strokeWidth="3" />
      </svg>
      <div className="absolute left-[487px] top-[476px] h-[27px] w-[80px] border-[3px] border-[#ff0000]" />
    </div>
  );
}
